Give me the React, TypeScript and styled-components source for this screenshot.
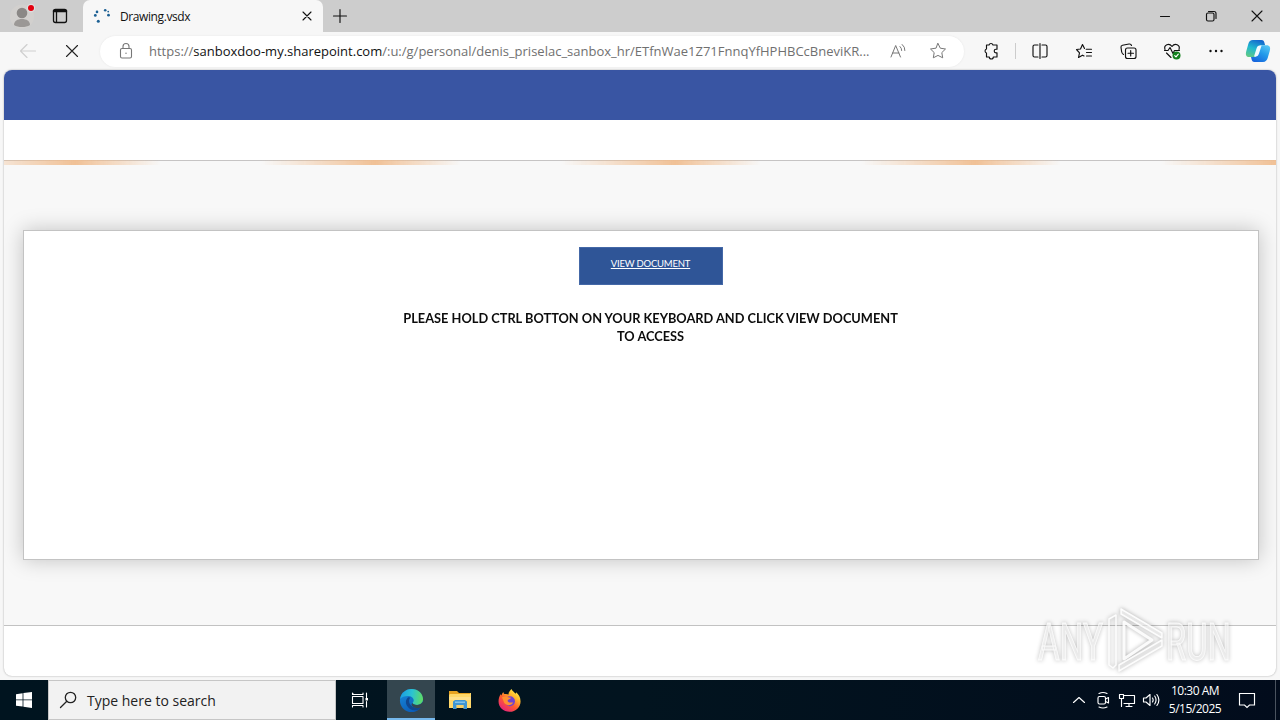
import React from 'react'
import styled, { createGlobalStyle } from 'styled-components'

interface IconProps {
  size?: number
  width?: number
  children: React.ReactNode
}

// icons are drawn on a 20 unit grid
const Icon: React.FC<IconProps> = ({ size = 20, width = 1.15, children }) => (
  <svg
    width={size}
    height={size}
    viewBox="0 0 20 20"
    fill="none"
    stroke="currentColor"
    strokeWidth={width}
    strokeLinecap="round"
    strokeLinejoin="round">
    {children}
  </svg>
)

const ProfileIcon = () => (
  <svg width="26" height="26" viewBox="0 0 26 26">
    <circle cx="13" cy="13.5" r="12" fill="#d2d0ce" />
    <circle cx="13" cy="10" r="5.3" fill="#8b8886" />
    <path d="M5 22c0-4 3.5-6 8-6s8 2 8 6c-2 1.500-5 2-8 2s-6-.5-8-2z" fill="#9b9896" />
    <circle cx="22" cy="5" r="4.200" fill="#dedede" />
    <circle cx="22" cy="5" r="3" fill="#e3000f" />
  </svg>
)

const WorkspaceIcon = () => (
  <Icon width={1.3}>
    <rect x="3.500" y="3.500" width="13" height="13" rx="2" />
    <path d="M4 5h12" strokeWidth="2.500" />
    <path d="M6.500 5v11" />
  </Icon>
)

const LoadingDots = () => (
  <svg width="18" height="18" viewBox="0 0 18 18" fill="#1c6094">
    <circle cx="4" cy="4.900" r="1.300" />
    <circle cx="2.300" cy="8.400" r="1.400" />
    <circle cx="12.200" cy="3.200" r="1.300" />
    <circle cx="15.200" cy="4.600" r="0.900" />
    <circle cx="15.500" cy="8.200" r="1.400" />
    <circle cx="5.300" cy="14.200" r="1.500" />
  </svg>
)

const CloseIcon = ({ r = 5 }: { r?: number }) => (
  <Icon width={1.1}>
    <path
      d={`M${10 - r} ${10 - r}L${10 + r} ${10 + r}M${10 + r} ${10 - r}L${10 - r} ${10 + r}`}
    />
  </Icon>
)

const Star = () => (
  <Icon width={1}>
    <path d="M10 2.500l2.300 4.700 5.200.8-3.700 3.600.9 5.200L10 14.400l-4.700 2.400.9-5.200L2.500 8l5.200-.8z" />
  </Icon>
)

const CopilotIcon = () => (
  <svg width="26" height="26" viewBox="0 0 26 26">
    <defs>
      <linearGradient id="copilotLeft" x1="0.600" y1="0" x2="0.200" y2="1">
        <stop offset="0" stopColor="#1469ce" />
        <stop offset="0.500" stopColor="#20b9cf" />
        <stop offset="1" stopColor="#61c985" />
      </linearGradient>
      <linearGradient id="copilotRight" x1="0.800" y1="0" x2="0.200" y2="1">
        <stop offset="0" stopColor="#55c5f4" />
        <stop offset="0.450" stopColor="#239bea" />
        <stop offset="1" stopColor="#1662dc" />
      </linearGradient>
    </defs>
    <path
      d="M8 2h8.500c2 0 2.500 1 3 3l.6 2.200h-3.600c-1.600 0-2.300 1-2.800 2.600l-2 6.700c-.5 1.500-1 2.500-2.700 2.500H4.500C1 19 .4 16.500 1.200 13.400L3.300 6C4 3.500 5.400 2 8 2z"
      fill="url(#copilotLeft)"
    />
    <path
      d="M18 24H9.500c-2 0-2.500-1-3-3L6 19h3.200c1.600 0 2.300-1 2.800-2.600l2-6.700c.5-1.500 1-2.500 2.700-2.500h4.800c3.500 0 4.100 2.400 3.300 5.500l-2.100 7.400C22 22.500 20.600 24 18 24z"
      fill="url(#copilotRight)"
    />
    <path d="M11.600 10.200c.5-1.600 1.500-2.700 3-2.700h2l-2.700 8.300c-.5 1.600-1.500 2.700-3 2.700H9z" fill="#f0faff" />
  </svg>
)

const EdgeIcon = () => (
  <svg width="25" height="25" viewBox="0 0 26 26">
    <defs>
      <linearGradient id="edgeTop" x1="0" y1="0.400" x2="1" y2="0.500">
        <stop offset="0" stopColor="#1b9de2" />
        <stop offset="0.500" stopColor="#2bc3d2" />
        <stop offset="1" stopColor="#5fdc62" />
      </linearGradient>
      <linearGradient id="edgeSide" x1="0" y1="0" x2="0.600" y2="1">
        <stop offset="0" stopColor="#1a8ddc" />
        <stop offset="1" stopColor="#0a5cb8" />
      </linearGradient>
    </defs>
    <circle cx="13" cy="13" r="12" fill="url(#edgeSide)" />
    <path
      d="M1.200 11.500C2 5.500 7 1 13 1c7 0 12 5 12 10.500 0 4-3 6.200-6.200 6.200-3 0-4.500-1-4.500-2 0-.8 1-1.200 1-3 0-2.500-2.600-4.500-6-4.500-3.600 0-6.600 1.300-8.100 3.300z"
      fill="url(#edgeTop)"
    />
    <path
      d="M9.500 9.500C7 11.500 6.500 15 8 18c2 4 7 6.500 12 4.600 1.300-.6 2.600-1.800 3.500-3.200-2 1-4 1.400-6.500 1-4-.7-6.500-3.600-6.500-6.600 0-1.600.5-3 1.500-3.800z"
      fill="#10478f"
    />
    <path
      d="M14.300 15.700c0 1 1.500 2 4.500 2 2.200 0 4.300-1 5.400-2.800l1.800.4-1.500 4.500c-3 1.600-7.500 1.400-10.200-.6-1.600-1.200-1.700-2.600 0-3.500z"
      fill="#34464f"
    />
  </svg>
)

const FolderIcon = () => (
  <svg width="24" height="24" viewBox="0 0 24 24">
    <path d="M1 3h8l2 2h12v5H1z" fill="#e7a320" />
    <path d="M2 6h20v-1h1v15H1V7z" fill="#ffd869" />
    <path d="M1 9h22v3H1z" fill="#ffe08a" />
    <path d="M5 21v-7.500L7 12h10l2 1.500V21h-3.600v-4H8.600v4z" fill="#3f96d2" />
    <path d="M7 13.500h10v1.500H7z" fill="#7ec2ec" />
    <path d="M8.600 17h6.800v3H8.600z" fill="#f7cf66" />
  </svg>
)

const FirefoxIcon = () => (
  <svg width="25" height="25" viewBox="0 0 26 26">
    <defs>
      <linearGradient id="foxBody" x1="0.850" y1="0.050" x2="0.200" y2="0.950">
        <stop offset="0" stopColor="#fff14a" />
        <stop offset="0.300" stopColor="#ffb52a" />
        <stop offset="0.600" stopColor="#ff5a30" />
        <stop offset="1" stopColor="#e5227b" />
      </linearGradient>
    </defs>
    <path
      d="M15 1c1 2.200 3 3.300 4.500 5 .3-.6.300-1 .3-1.500C22.500 6.500 24.500 10 24.500 14c0 6-5 10.800-11.300 10.800C6.500 24.800 1.600 20 1.600 13.800c0-3 1-5.600 2.400-7.600 0 .8.200 1.300.5 1.700C5 6.500 5.600 5.200 6.500 4.200c.2 1 .6 1.600 1.200 2.100 1.500-.3 3-.2 4.300.4C12 4.500 13.500 2.500 15 1z"
      fill="url(#foxBody)"
    />
    <circle cx="13.500" cy="13.800" r="5.200" fill="#7043cf" />
    <path
      d="M5 10c2-1.500 4.500-1.500 6.500-.4l3 .5c-.3 1.200-1.700 1.400-2.900 2.100-1 .7-.7 2 .6 2.700 1.500.8 3-.3 4.600.3-1.500 3-6 3.700-8.500 1.300C6.800 15 6.500 12 5 10z"
      fill="#ff9130"
    />
  </svg>
)

const Watermark = () => (
  <WatermarkLayer>
    <svg width="204" height="72" viewBox="0 0 204 72">
      <g
        fill="#ffffff"
        fillOpacity="0.550"
        stroke="#ffffff"
        strokeWidth="1"
        strokeOpacity="0.800"
        fontFamily="'Roboto', 'Liberation Sans', sans-serif"
        fontSize="52">
        <text transform="translate(4 56) scale(0.640 1)">ANY</text>
        <text transform="translate(132 56) scale(0.630 1)">RUN</text>
      </g>
      <g fill="none" stroke="#ffffff" strokeOpacity="0.900" strokeWidth="3" strokeLinejoin="round">
        <path d="M75 61V15l7-4v50l-3 3z" strokeWidth="1.500" />
        <path d="M87 5l41 24v5L87 10z" fill="#ffffff" fillOpacity="0.600" strokeWidth="1.500" />
        <path d="M90 18l28 18-28 19z" />
        <path d="M85 61l43-25v6L85 67z" fill="#ffffff" fillOpacity="0.400" strokeWidth="1.500" />
      </g>
    </svg>
  </WatermarkLayer>
)

const BrowserTabs = () => (
  <TabStrip>
    <ProfileSlot>
      <ProfileIcon />
    </ProfileSlot>
    <WorkspaceSlot>
      <WorkspaceIcon />
    </WorkspaceSlot>
    <Tab>
      <LoadingDots />
      <TabTitle>Drawing.vsdx</TabTitle>
      <CloseIcon r={4} />
    </Tab>
    <NewTab>
      <Icon>
        <path d="M10 3.500v13M3.500 10h13" />
      </Icon>
    </NewTab>
    <WindowButtons>
      <Icon>
        <path d="M5.500 10.500h9" />
      </Icon>
      <Icon>
        <rect x="5.500" y="7" width="7.500" height="8" rx="1.500" />
        <path d="M7.500 5.500h5.500q2 0 2 2v5" />
      </Icon>
      <CloseIcon />
    </WindowButtons>
  </TabStrip>
)

const AddressBar = () => (
  <Toolbar>
    <NavButton $dim>
      <Icon>
        <path d="M17.500 10h-15M9 3.500L2.500 10 9 16.500" />
      </Icon>
    </NavButton>
    <NavButton>
      <CloseIcon r={5.5} />
    </NavButton>
    <UrlField>
      <Icon width={1.1}>
        <rect x="4.500" y="7.500" width="11" height="9.500" rx="1.500" />
        <path d="M7 7.500V5.500a3 3 0 016 0v2" />
        <circle cx="10" cy="12.300" r="0.700" fill="currentColor" stroke="none" />
      </Icon>
      <UrlText>
        <span>https://</span>
        <Host>sanboxdoo-my.sharepoint.com</Host>
        <span>/:u:/g/personal/denis_priselac_sanbox_hr/ETfnWae1Z71FnnqYfHPHBCcBneviKR...</span>
      </UrlText>
      <Icon width={1}>
        <path d="M3 16L7.700 4.500 12.500 16M4.600 12h6.300M12 5.500q1.800 1.700 1.700 4M14.200 3.500q3 2.500 2.700 6" />
      </Icon>
      <StarSlot>
        <Star />
      </StarSlot>
    </UrlField>
    <ToolIcons>
      <Icon>
        <path d="M5.500 4h2.500a2.100 2.100 0 014 0h4v4.200h-1a1.800 1.800 0 000 3.600h1V16h-3.700a2 2 0 01-4 0H5.500v-4a2.100 2.100 0 010-4z" />
      </Icon>
      <Divider />
      <Icon>
        <path d="M8 4H4.500Q3 4 3 5.500v9Q3 16 4.500 16H8M12 4h3.500Q17 4 17 5.500v9q0 1.500-1.500 1.500H12M10 2.500v15" />
      </Icon>
      <Icon>
        <path d="M12.200 8.200H17.500M12.500 11.500h5M12.500 15h5M10.500 7.500L8.500 3.500 6.500 8 2.500 8.500l3 3.400-1 4.600L8.500 14.200l1.500.8" />
      </Icon>
      <Icon>
        <rect x="7.500" y="7" width="10.500" height="10.500" rx="2" />
        <path d="M12.700 9.500v5.500M10 12.200h5.500M5.500 13.500Q4 12.500 3.700 11L3 6.500Q2.700 4.700 4.500 4.300L11 3q2-.3 2.500 1.500" />
      </Icon>
      <Icon>
        <path d="M3 8.500C1.500 4 7 1.500 10 5.500c3-4 8.500-1.500 7 3M2.500 9.500h3.500l2-3 3 6 1.500-3h5M4.500 12l4.500 4.500" />
        <circle cx="14.500" cy="14.500" r="4" fill="#13801d" stroke="none" />
        <path d="M12.700 14.600l1.300 1.300 2.300-2.700" stroke="#ffffff" />
      </Icon>
      <Icon>
        <g fill="currentColor" stroke="none">
          <circle cx="4.500" cy="10" r="1.200" />
          <circle cx="10" cy="10" r="1.200" />
          <circle cx="15.500" cy="10" r="1.200" />
        </g>
      </Icon>
    </ToolIcons>
    <CopilotIcon />
  </Toolbar>
)

const Taskbar = () => (
  <TaskbarRow>
    <StartButton>
      <svg width="16" height="16" viewBox="0 0 16 16" fill="#ffffff">
        <path d="M0 2.200l6.600-1v6.300H0zM7.400 1.100L16 0v7.500H7.400zM0 8.300h6.600v6.300L0 13.700zM7.400 8.300H16V16l-8.600-1.200z" />
      </svg>
    </StartButton>
    <SearchBox>
      <Icon width={1.3}>
        <circle cx="12.500" cy="7.500" r="5.200" />
        <path d="M8.800 11.200L2.500 17.500" />
      </Icon>
      <span>Type here to search</span>
    </SearchBox>
    <TaskButton $gap={3}>
      <Icon width={1.1}>
        <path d="M3 4.500V3.500M2.500 6.500h10.500v7H2.500zM13 3v1.500H2.500V3M13 17v-1.500H2.500V17M16.500 3v4.500M16.500 11.500V17" />
        <rect x="15.500" y="8" width="2.500" height="2.500" fill="currentColor" stroke="none" />
      </Icon>
    </TaskButton>
    <TaskButton $active>
      <EdgeIcon />
    </TaskButton>
    <TaskButton>
      <FolderIcon />
    </TaskButton>
    <TaskButton>
      <FirefoxIcon />
    </TaskButton>
    <Tray>
      <Icon>
        <path d="M4.500 12.500l5.500-5 5.500 5" />
      </Icon>
      <Icon>
        <rect x="5" y="6.500" width="7.500" height="7.500" rx="1.500" />
        <path d="M12.500 9l3-1.500v5.500l-3-1.500M6 3.500q4-2 8 0M6 17q4 2 8 0" />
      </Icon>
      <Icon>
        <path d="M6.500 5.500H17.500v8H7M4.500 9.500v7M9 16.500h6M12 13.500v3M2.500 4.500h4v4h-4zM4.500 8.500v2" />
      </Icon>
      <Icon>
        <path d="M2.500 8h2.500l4-3.500v11L5 12H2.500zM11.500 8q1.300 2 0 4M13.700 6q2.700 4 0 8M15.900 4.500q4 5.500 0 11" />
      </Icon>
    </Tray>
    <Clock>
      <span>10:30 AM</span>
      <span>5/15/2025</span>
    </Clock>
    <Notifications>
      <Icon>
        <path d="M2.500 3.500h15v11.500h-5L10 17.500 7.500 15h-5z" strokeLinejoin="miter" />
      </Icon>
    </Notifications>
    <ShowDesktop />
  </TaskbarRow>
)

const App: React.FC = () => (
  <Screen>
    <GlobalStyle />
    <BrowserTabs />
    <AddressBar />
    <Viewport>
      <AppHeader />
      <CommandBar />
      <Canvas>
        <Progress />
        <Sheet>
          <ViewButton href="#">VIEW DOCUMENT</ViewButton>
          <Instruction>
            <span>PLEASE HOLD CTRL BOTTON ON YOUR KEYBOARD AND CLICK VIEW DOCUMENT</span>
            <span>TO ACCESS</span>
          </Instruction>
        </Sheet>
      </Canvas>
      <StatusBar />
    </Viewport>
    <Taskbar />
    <Watermark />
  </Screen>
)

export default App

const GlobalStyle = createGlobalStyle`
  * {
    box-sizing: border-box;
  }
  body {
    margin: 0;
    font-family: 'Open Sans', 'Noto Sans', sans-serif;
  }
  svg {
    display: block;
    flex-shrink: 0;
  }
`

const Screen = styled.div`
  position: relative;
  display: flex;
  flex-direction: column;
  width: 1280px;
  height: 720px;
  overflow: hidden;
  background: #f7f7f7;
  color: #111111;
`

const TabStrip = styled.div`
  display: flex;
  height: 32px;
  flex-shrink: 0;
  background: #cdcdcd;
`

const ProfileSlot = styled.div`
  width: 50px;
  padding: 3px 0 0 9px;
`

const WorkspaceSlot = styled.div`
  width: 33px;
  padding-top: 6px;
`

const Tab = styled.div`
  display: flex;
  align-items: center;
  width: 240px;
  padding: 0 6px 0 10px;
  border-radius: 7px 7px 0 0;
  background: #f7f7f7;
`

const TabTitle = styled.span`
  flex: 1;
  padding-left: 9px;
  font-size: 12px;
  letter-spacing: -0.4px;
  white-space: nowrap;
`

const NewTab = styled.div`
  padding: 6px 0 0 7px;
`

const WindowButtons = styled.div`
  display: flex;
  gap: 26px;
  margin-left: auto;
  padding: 6px 13px 0 0;
`

const Toolbar = styled.div`
  display: flex;
  align-items: center;
  height: 38px;
  flex-shrink: 0;
  padding-left: 18px;
`

const NavButton = styled.div<{ $dim?: boolean }>`
  width: 44px;
  color: ${props => (props.$dim ? '#cfcfcf' : '#222222')};
`

const UrlField = styled.div`
  display: flex;
  align-items: center;
  width: 864px;
  height: 31px;
  margin-left: -6px;
  padding-left: 16px;
  border-radius: 16px;
  background: #ffffff;
  box-shadow: 0 0 2px #e4e4e4;
  color: #777777;
`

const UrlText = styled.div`
  display: flex;
  width: 752px;
  padding-left: 13px;
  color: #707070;
  font-size: 13px;
  white-space: nowrap;
`

const Host = styled.span`
  color: #111111;
`

const StarSlot = styled.div`
  margin-left: 20px;
`

const ToolIcons = styled.div`
  display: flex;
  align-items: center;
  justify-content: space-between;
  width: 245px;
  margin: 0 19px 0 17px;
`

const Divider = styled.div`
  width: 1px;
  height: 16px;
  margin: 0 -10px;
  background: #cccccc;
`

const Viewport = styled.div`
  display: flex;
  flex-direction: column;
  height: 606px;
  flex-shrink: 0;
  margin: 0 4px 4px;
  border-radius: 8px;
  overflow: hidden;
  background: #ffffff;
  box-shadow: 0 0 2px rgba(0, 0, 0, 0.35);
`

const AppHeader = styled.div`
  height: 50px;
  background: #3955a3;
`

const CommandBar = styled.div`
  height: 40px;
`

const Canvas = styled.div`
  height: 466px;
  border-top: 1px solid #c6c4c4;
  border-bottom: 1px solid #c2c2c2;
  background: #f8f8f8;
`

const Progress = styled.div`
  height: 5px;
  margin-top: -1px;
  background: repeating-linear-gradient(
    90deg,
    rgba(240, 190, 145, 0) 0,
    rgba(240, 190, 145, 0.95) 114px,
    rgba(240, 190, 145, 0) 200px,
    rgba(240, 190, 145, 0) 300px
  );
  background-size: 300px 100%;
  background-position-x: -43px;
`

const Sheet = styled.div`
  display: flex;
  flex-direction: column;
  align-items: center;
  height: 330px;
  margin: 65px 17px 0 19px;
  padding: 16px 0 0 19px;
  border: 1px solid #c3c3c3;
  background: #ffffff;
  box-shadow: 0 0 20px rgba(0, 0, 0, 0.22);
`

const ViewButton = styled.a`
  width: 144px;
  height: 38px;
  padding-top: 9px;
  border: 1px solid #4468a7;
  background: #2f5597;
  color: #ffffff;
  font: 9.5px/14px 'Lato', sans-serif;
  letter-spacing: -0.2px;
  text-align: center;
  text-decoration: underline;
`

const Instruction = styled.div`
  display: flex;
  flex-direction: column;
  align-items: center;
  margin-top: 24px;
  font: bold 14px/18px 'Lato', sans-serif;
  color: #0c0c0c;
  white-space: nowrap;
  transform: scaleX(0.914);
`

const StatusBar = styled.div`
  flex: 1;
`

const TaskbarRow = styled.div`
  display: flex;
  height: 40px;
  flex-shrink: 0;
  background: linear-gradient(90deg, #00141f, #02141f 50%, #020c1c);
  color: #ffffff;
`

const StartButton = styled.div`
  display: flex;
  align-items: center;
  justify-content: center;
  width: 48px;
`

const SearchBox = styled.div`
  display: flex;
  align-items: center;
  gap: 9px;
  width: 288px;
  padding-left: 9px;
  border: 1px solid #c6c6c6;
  background: #f2f2f2;
  color: #222222;
  font-size: 14px;
`

const TaskButton = styled.div<{ $active?: boolean; $gap?: number }>`
  display: flex;
  align-items: center;
  justify-content: center;
  width: 48px;
  margin-right: ${props => props.$gap ?? 1}px;
  background: ${props => (props.$active ? '#34464f' : 'transparent')};
  box-shadow: ${props => (props.$active ? 'inset 0 -2px #76b9ed' : 'none')};
`

const Tray = styled.div`
  display: flex;
  align-items: center;
  gap: 4px;
  margin-left: auto;
`

const Clock = styled.div`
  display: flex;
  flex-direction: column;
  align-items: center;
  width: 68px;
  padding-top: 2px;
  font-size: 12px;
  line-height: 18px;
  letter-spacing: -0.5px;
`

const Notifications = styled.div`
  display: flex;
  align-items: center;
  width: 46px;
  padding-left: 8px;
`

const ShowDesktop = styled.div`
  width: 5px;
  border-left: 1px solid #4a535f;
`

// sits over the page, like a recorder overlay
const WatermarkLayer = styled.div`
  position: absolute;
  right: 42px;
  bottom: 44px;
  filter: drop-shadow(0 0 2px rgba(0, 0, 0, 0.36));
`
